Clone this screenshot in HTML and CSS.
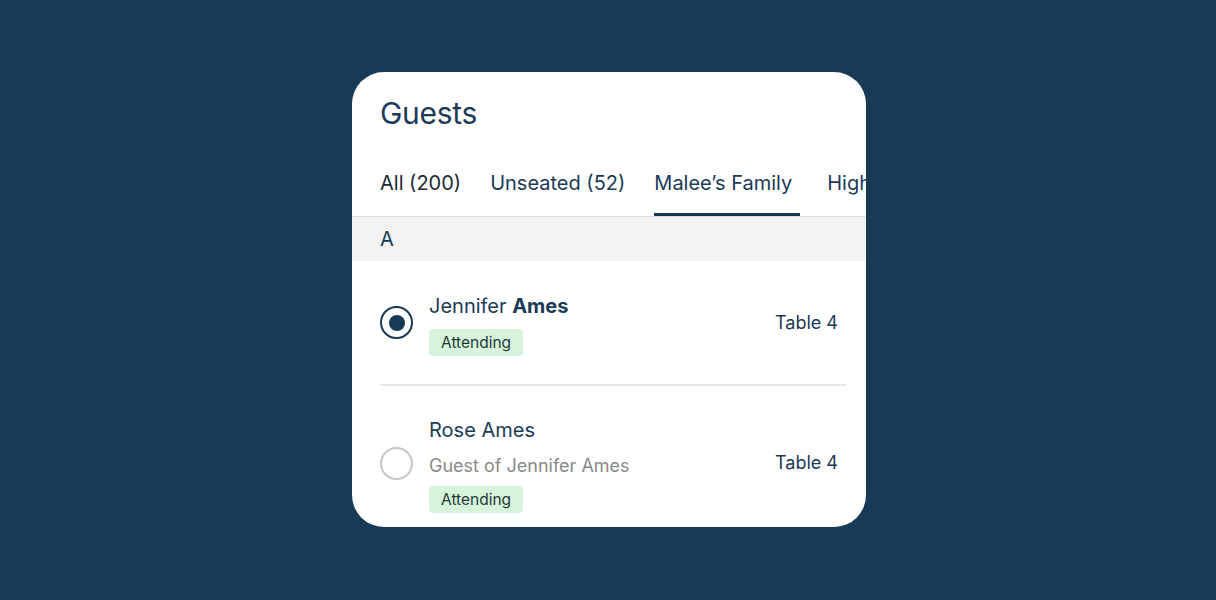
FILE: index.html
```html
<!DOCTYPE html>
<html>
<head>
<meta charset="utf-8">
<link rel="stylesheet" href="styles.css">
</head>
<body>
<div class="stage">
  <div class="card">
    <h1 class="title">Guests</h1>
    <div class="tabs">
      <div class="tab tab-all">All (200)</div>
      <div class="tab">Unseated (52)</div>
      <div class="tab active">Malee’s Family</div>
      <div class="tab">Highlights</div>
    </div>
    <div class="section">A</div>
    <div class="list">
      <div class="row">
        <div class="radio checked"><span class="dot"></span></div>
        <div class="info">
          <div class="name">Jennifer <b>Ames</b></div>
          <div class="badge">Attending</div>
        </div>
        <div class="table">Table 4</div>
      </div>
      <div class="divider"></div>
      <div class="row row2">
        <div class="radio"></div>
        <div class="info">
          <div class="name">Rose Ames</div>
          <div class="sub">Guest of Jennifer Ames</div>
          <div class="badge">Attending</div>
        </div>
        <div class="table">Table 4</div>
      </div>
    </div>
  </div>
</div>
</body>
</html>
```

FILE: styles.css
```css
* { box-sizing: border-box; }
html, body { margin: 0; padding: 0; }
body {
  background: #183a55;
  font-family: Inter, "Noto Sans", sans-serif;
  color: #1b3a57;
  width: 1216px;
  height: 600px;
  overflow: hidden;
}
.stage {
  display: flex;
  justify-content: flex-start;
  padding: 72px 0 0 352px;
}
.card {
  width: 514px;
  height: 455px;
  background: #fff;
  border-radius: 32px;
  overflow: hidden;
}
.title {
  margin: 0;
  padding: 22px 28px 0;
  font-size: 30px;
  line-height: 38px;
  font-weight: 400;
  letter-spacing: -0.3px;
  color: #1b3a57;
}
.tabs {
  display: flex;
  gap: 29px;
  padding: 38px 0 0 28px;
  border-bottom: 1px solid #dedede;
  white-space: nowrap;
  font-size: 20px;
}
.tab {
  flex: none;
  line-height: 26px;
  padding-bottom: 17px;
  border-bottom: 3px solid transparent;
  color: #1b3a57;
}
.tab-all { color: #1e2a36; }
.tab.active {
  border-bottom-color: #183a55;
  padding-right: 8px;
  margin-right: -2px;
}
.section {
  background: #f2f2f2;
  height: 44px;
  line-height: 44px;
  padding-left: 28px;
  font-size: 20px;
  color: #1b3a57;
}
.list { padding: 0 20px 0 28px; }
.row {
  display: flex;
  align-items: center;
  padding: 32px 8px 28px 0;
}
.row2 { padding-top: 31px; }
.radio {
  flex: none;
  width: 33px;
  height: 33px;
  border-radius: 50%;
  border: 2px solid #c6c6c6;
  display: flex;
  align-items: center;
  justify-content: center;
  margin-right: 16px;
  margin-bottom: 4px;
}
.radio.checked { border: 2.5px solid #183a55; }
.dot {
  width: 16px;
  height: 16px;
  border-radius: 50%;
  background: #183a55;
}
.info {
  flex: 1;
  display: flex;
  flex-direction: column;
  align-items: flex-start;
}
.name {
  font-size: 20px;
  line-height: 26px;
  color: #1b3a57;
}
.name b { font-weight: 650; }
.sub {
  font-size: 18px;
  line-height: 24px;
  margin-top: 11px;
  color: #8a8a8a;
}
.badge {
  margin-top: 10px;
  background: #d7f3dc;
  color: #1d3b36;
  font-size: 15.5px;
  height: 27px;
  line-height: 27px;
  padding: 0 12px;
  border-radius: 4px;
}
.row2 .badge { margin-top: 8px; }
.table {
  flex: none;
  font-size: 18px;
  color: #1b3a57;
  margin-bottom: 5px;
}
.divider {
  height: 2px;
  background: #e6e6e6;
}
```
